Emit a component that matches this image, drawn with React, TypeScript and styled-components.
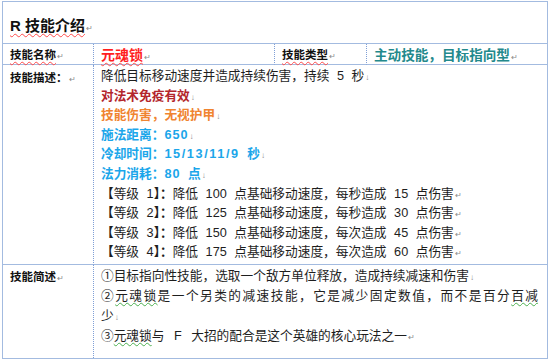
import React from 'react';
import styled, { createGlobalStyle } from 'styled-components';

const Global = createGlobalStyle`
  html, body {
    margin: 0;
    background: #ffffff;
  }
  body {
    font-family: "Liberation Sans", "Noto Sans CJK SC", sans-serif;
    color: #1e1e1e;
  }
`;

//Styles
const Page = styled.div`
  width: 553px;
  height: 363px;
  padding: 1px 0 0 2px;
  box-sizing: border-box;
  overflow: hidden;
`;

const Sheet = styled.div`
  display: grid;
  grid-template-columns: 90px 181px 92px 181px;
  grid-template-rows: 42px 21px 200px 93px;
  width: 544px;
  border: 1px solid #a3bbe0;
`;

const Cell = styled.div<{ span?: number; divider?: boolean; last?: boolean }>`
  grid-column: span ${p => p.span || 1};
  border-bottom: ${p => (p.last ? 'none' : '1px solid #a3bbe0')};
  border-left: ${p => (p.divider ? '1px dotted #7f9fd6' : 'none')};
  padding-left: 7px;
  padding-right: 8px;
  box-sizing: border-box;
  min-width: 0;
`;

const TitleCell = styled(Cell)`
  display: flex;
  align-items: center;
  padding-top: 4px;
`;

const Title = styled.h1`
  margin: 0;
  font-size: 15px;
  font-weight: 700;
  color: #111;
`;

const Squiggle = styled.span<{ tone?: 'red' | 'green' }>`
  text-decoration: underline wavy ${p => (p.tone === 'green' ? '#4caf50' : '#ff4a4a')};
  text-decoration-thickness: 1px;
  text-underline-offset: 2px;
`;

const RowCell = styled(Cell)`
  display: flex;
  align-items: center;
`;

const Label = styled.span`
  font-size: 11.5px;
  font-weight: 700;
  color: #111;
`;

const TopCell = styled(Cell)<{ pad: number }>`
  padding-top: ${p => p.pad}px;
`;

const LabelLine = styled.div<{ lh: number }>`
  line-height: ${p => p.lh}px;
`;

const Value = styled.span<{ color: string; size: number }>`
  font-size: ${p => p.size}px;
  font-weight: 700;
  color: ${p => p.color};
`;

const Line = styled.div<{ color?: string; bold?: boolean; lh: number; gap?: number }>`
  font-size: 12.7px;
  line-height: ${p => p.lh}px;
  white-space: nowrap;
  word-spacing: ${p => p.gap || 0}px;
  color: ${p => p.color || '#1e1e1e'};
  font-weight: ${p => (p.bold ? 700 : 400)};
`;

const JustLine = styled(Line)`
  text-align: justify;
  text-align-last: justify;
  white-space: normal;
  width: 437px;
`;

const Num = styled.span<{ spacing: number }>`
  letter-spacing: ${p => p.spacing}px;
`;

const Bracket = styled.span`
  font-weight: 700;
`;

const Mark = styled.span`
  font-size: 8px;
  line-height: 0;
  font-weight: 400;
  color: #8a8a8a;
  margin-left: 1px;
`;

const BR = () => <Mark>↓</Mark>;
const RET = () => <Mark>↵</Mark>;

const levels = [
  ['1', '100', '每秒', '15'],
  ['2', '125', '每秒', '30'],
  ['3', '150', '每次', '45'],
  ['4', '175', '每次', '60'],
];

const LH = 19.6;

export default function App() {
  return (
    <Page>
      <Global />
      <Sheet>
        <TitleCell span={4}>
          <Title>
            <Squiggle>R 技能介绍</Squiggle>
            <RET />
          </Title>
        </TitleCell>

        <RowCell>
          <Label>
            <Squiggle>技能名称</Squiggle>
            <RET />
          </Label>
        </RowCell>
        <RowCell divider>
          <Value color="#ff1f1f" size={14}>
            <Squiggle>元魂锁</Squiggle>
            <RET />
          </Value>
        </RowCell>
        <RowCell divider>
          <Label>
            <Squiggle>技能类型</Squiggle>
            <RET />
          </Label>
        </RowCell>
        <RowCell divider>
          <Value color="#23898c" size={13.6}>
            主动技能，目标指向型
            <RET />
          </Value>
        </RowCell>

        <TopCell pad={2}>
          <LabelLine lh={LH}>
            <Label>
              技能描述：
              <RET />
            </Label>
          </LabelLine>
        </TopCell>
        <TopCell span={3} divider pad={2}>
          <Line lh={LH} gap={4}>
            降低目标移动速度并造成持续伤害，持续 5 秒<BR />
          </Line>
          <Line lh={LH} color="#b3262c" bold>
            对法术免疫有效<BR />
          </Line>
          <Line lh={LH} color="#f08430" bold>
            技能伤害，无视护甲<BR />
          </Line>
          <Line lh={LH} color="#1ba6ea" bold>
            施法距离：<Num spacing={1}>650</Num>
            <BR />
          </Line>
          <Line lh={LH} color="#1ba6ea" bold gap={4}>
            冷却时间：<Num spacing={1.6}>15/13/11/9</Num> 秒<BR />
          </Line>
          <Line lh={LH} color="#1ba6ea" bold gap={4}>
            法力消耗：<Num spacing={1}>80</Num> 点<BR />
          </Line>
          {levels.map(([lv, slow, per, dmg]) => (
            <Line lh={LH} key={lv} gap={4}>
              <Bracket>【</Bracket>等级 {lv}
              <Bracket>】：</Bracket>降低 {slow} 点基础移动速度，{per}造成 {dmg} 点伤害
              <RET />
            </Line>
          ))}
        </TopCell>

        <TopCell last pad={1}>
          <LabelLine lh={20}>
            <Label>
              技能简述
              <RET />
            </Label>
          </LabelLine>
        </TopCell>
        <TopCell span={3} divider last pad={1}>
          <Line lh={20}>
            ①目标指向性技能，选取一个敌方单位释放，造成持续减速和伤害
            <BR />
          </Line>
          <JustLine lh={20}>
            ②<Squiggle tone="green">元魂锁</Squiggle>是一个另类的减速技能，它是减少固定数值，而不是百分
            <Squiggle tone="green">百减</Squiggle>
          </JustLine>
          <Line lh={20}>
            少<BR />
          </Line>
          <Line lh={20} gap={6}>
            ③<Squiggle tone="green">元魂锁</Squiggle>与 F 大招的配合是这个英雄的核心玩法之一
            <RET />
          </Line>
        </TopCell>
      </Sheet>
    </Page>
  );
}
